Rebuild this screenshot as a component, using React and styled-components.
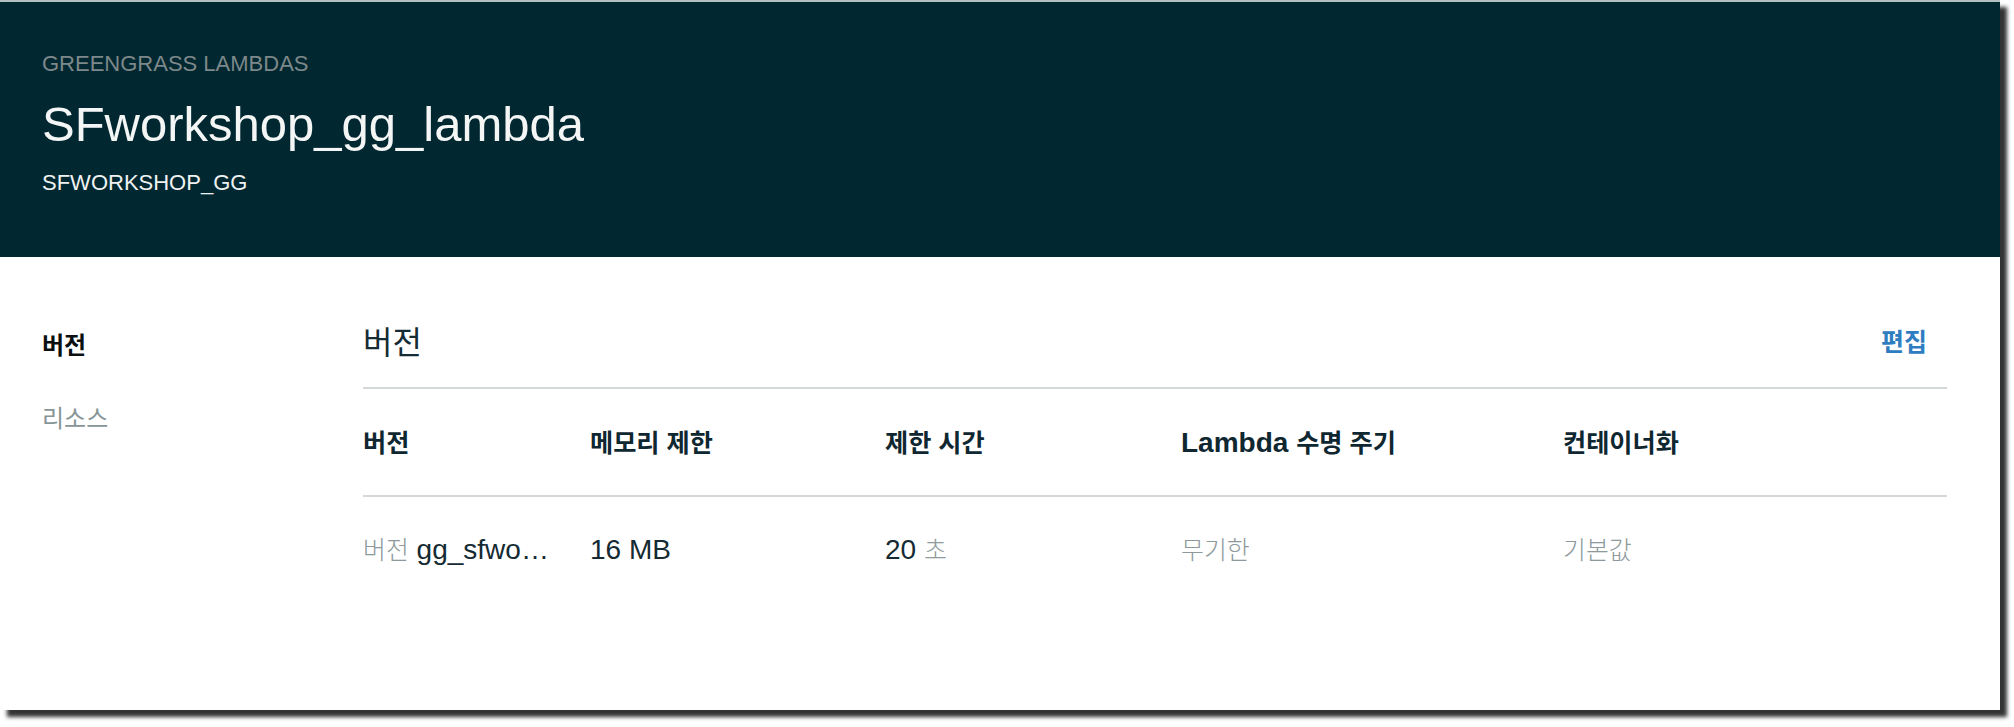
import React from "react";
import styled, { createGlobalStyle } from "styled-components";

const Global = createGlobalStyle`
  html, body { margin: 0; padding: 0; background: #ffffff; }
  body { font-family: "Liberation Sans", "Noto Sans CJK KR", Arial, sans-serif; }
  * { box-sizing: border-box; }
`;

const Page = styled.div`
  padding-bottom: 17px;
`;

const Card = styled.div`
  width: 2000px;
  height: 710px;
  background: #ffffff;
  border-top: 2px solid #b4bfc1;
  box-shadow: 7px 7px 4px rgba(0, 0, 0, 0.8);
  display: flex;
  flex-direction: column;
`;

const Header = styled.header`
  height: 255px;
  flex: none;
  background: #012730;
  padding: 47px 0 0 42px;
  display: flex;
  flex-direction: column;
`;

const Crumb = styled.div`
  font-size: 22px;
  line-height: 30px;
  color: #7d888a;
`;

const Title = styled.h1`
  margin: 15px 0 0;
  font-size: 49px;
  font-weight: 400;
  line-height: 60px;
  color: #f4f5f5;
`;

const Sub = styled.div`
  margin-top: 14px;
  font-size: 22px;
  line-height: 30px;
  color: #f0f2f2;
`;

const Body = styled.div`
  flex: 1;
  display: flex;
`;

const Side = styled.nav`
  width: 363px;
  flex: none;
  padding: 71px 0 0 42px;
  display: flex;
  flex-direction: column;
  gap: 41px;
`;

const SideItem = styled.a`
  font-family: "Noto Sans CJK KR", sans-serif;
  font-size: 24px;
  line-height: 32px;
  font-weight: ${(p) => (p.$active ? 700 : 400)};
  color: ${(p) => (p.$active ? "#0b0f10" : "#879596")};
  text-decoration: none;
`;

const Main = styled.main`
  flex: 1;
  padding: 59px 53px 0 0;
`;

const SectionHead = styled.div`
  display: flex;
  justify-content: space-between;
  align-items: center;
  height: 73px;
  padding-bottom: 23px;
  border-bottom: 2px solid #d5d8d8;
`;

const SectionTitle = styled.h2`
  margin: 0;
  font-family: "Noto Sans CJK KR", sans-serif;
  font-size: 32px;
  font-weight: 400;
  line-height: 48px;
  color: #152c35;
`;

const EditLink = styled.a`
  margin-right: 20px;
  font-family: "Noto Sans CJK KR", sans-serif;
  font-size: 25px;
  font-weight: 700;
  line-height: 48px;
  color: #2f7dc1;
  text-decoration: none;
`;

const Row = styled.div`
  display: grid;
  grid-template-columns: 227px 295px 296px 382px 1fr;
  padding: ${(p) => (p.$head ? "38px 0 34px" : "37px 0 0")};
  border-bottom: ${(p) => (p.$head ? "2px solid #d5d8d8" : "none")};
`;

const Cell = styled.div`
  padding-right: 36px;
  font-size: 28px;
  line-height: 36px;
  height: 36px;
  font-weight: ${(p) => (p.$head ? 700 : 400)};
  color: ${(p) => (p.$head ? "#0f2730" : "#152a32")};
  white-space: nowrap;
  overflow: ${(p) => (p.$clip ? "hidden" : "visible")};
  text-overflow: ${(p) => (p.$clip ? "ellipsis" : "clip")};
  margin-top: -2px;
`;

const K = styled.span`
  font-size: 0.9em;
  line-height: 1;
`;

const Muted = styled.span`
  font-family: "Noto Sans CJK KR Light", "Noto Sans CJK KR DemiLight", "Noto Sans CJK KR", sans-serif;
  font-size: 0.89em;
  line-height: 1;
  font-weight: 300;
  color: #8d999b;
`;

const columns = [
  <K>버전</K>,
  <K>메모리 제한</K>,
  <K>제한 시간</K>,
  <>
    Lambda <K>수명 주기</K>
  </>,
  <K>컨테이너화</K>,
];

export default function App() {
  return (
    <Page>
      <Global />
      <Card>
        <Header>
          <Crumb>GREENGRASS LAMBDAS</Crumb>
          <Title>SFworkshop_gg_lambda</Title>
          <Sub>SFWORKSHOP_GG</Sub>
        </Header>
        <Body>
          <Side>
            <SideItem $active>버전</SideItem>
            <SideItem>리소스</SideItem>
          </Side>
          <Main>
            <SectionHead>
              <SectionTitle>버전</SectionTitle>
              <EditLink>편집</EditLink>
            </SectionHead>
            <Row $head>
              {columns.map((c, i) => (
                <Cell $head key={i}>
                  {c}
                </Cell>
              ))}
            </Row>
            <Row>
              <Cell $clip>
                <Muted>버전</Muted> gg_sfworkshop_gg_lambda
              </Cell>
              <Cell>16 MB</Cell>
              <Cell>
                20 <Muted>초</Muted>
              </Cell>
              <Cell>
                <Muted>무기한</Muted>
              </Cell>
              <Cell>
                <Muted>기본값</Muted>
              </Cell>
            </Row>
          </Main>
        </Body>
      </Card>
    </Page>
  );
}
